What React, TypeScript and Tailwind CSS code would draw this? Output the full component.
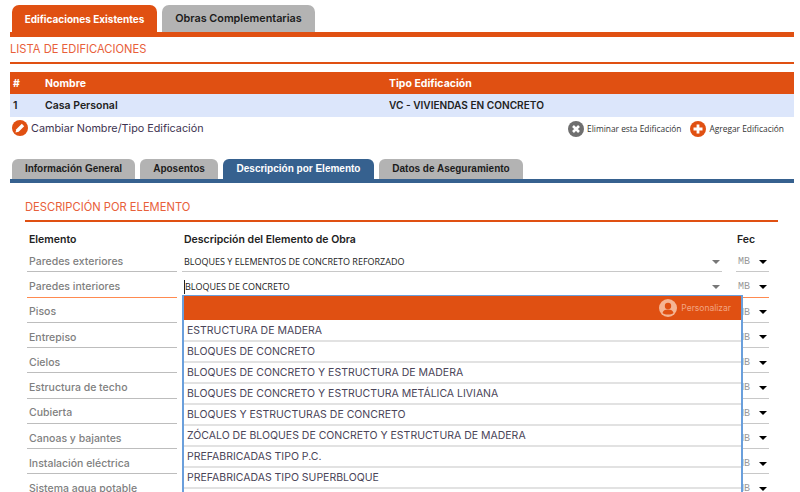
const poppins = "font-['Inter','Noto_Sans',sans-serif]";

const elementos = [
  'Paredes exteriores',
  'Paredes interiores',
  'Pisos',
  'Entrepiso',
  'Cielos',
  'Estructura de techo',
  'Cubierta',
  'Canoas y bajantes',
  'Instalación eléctrica',
  'Sistema agua potable',
];

const opciones = [
  'ESTRUCTURA DE MADERA',
  'BLOQUES DE CONCRETO',
  'BLOQUES DE CONCRETO Y ESTRUCTURA DE MADERA',
  'BLOQUES DE CONCRETO Y ESTRUCTURA METÁLICA LIVIANA',
  'BLOQUES Y ESTRUCTURAS DE CONCRETO',
  'ZÓCALO DE BLOQUES DE CONCRETO Y ESTRUCTURA DE MADERA',
  'PREFABRICADAS TIPO P.C.',
  'PREFABRICADAS TIPO SUPERBLOQUE',
];

function Caret({ dark }: { dark?: boolean }) {
  return (
    <span
      className={`block w-0 h-0 border-x-[4px] border-x-transparent border-t-[4px] ${
        dark ? 'border-t-black' : 'border-t-[#777777]'
      }`}
    />
  );
}

function PencilIcon() {
  return (
    <svg width="16" height="16" viewBox="0 0 16 16" className="shrink-0">
      <circle cx="8" cy="8" r="8" fill="#e05012" />
      <path d="M3.500 12.500l.8-3.200 5.500-5.500 2.400 2.400-5.500 5.500z" fill="#ffffff" />
    </svg>
  );
}

function CloseIcon() {
  return (
    <svg width="16" height="16" viewBox="0 0 16 16" className="shrink-0">
      <circle cx="8" cy="8" r="8" fill="#6f6f6f" />
      <path d="M5 5l6 6M11 5l-6 6" stroke="#ffffff" strokeWidth="2.600" />
    </svg>
  );
}

function PlusIcon() {
  return (
    <svg width="16" height="16" viewBox="0 0 16 16" className="shrink-0">
      <circle cx="8" cy="8" r="8" fill="#e05012" />
      <path d="M8 3.500v9M3.500 8h9" stroke="#ffffff" strokeWidth="2.800" />
    </svg>
  );
}

function UserIcon() {
  return (
    <svg width="18" height="18" viewBox="0 0 18 18" className="shrink-0">
      <circle cx="9" cy="9" r="9" fill="#f4b594" />
      <circle cx="9" cy="7" r="3.200" fill="#e05012" />
      <path d="M3.500 14c.5-2.600 2.500-3.600 5.500-3.600s5 1 5.500 3.600c-1.300 1-3.200 1.600-5.500 1.600s-4.200-.6-5.500-1.600z" fill="#e05012" />
    </svg>
  );
}

export default function App() {
  return (
    <div className="relative w-[800px] h-[492px] overflow-hidden bg-white pl-[10px] pr-[6px] pt-[5px]">
      <div className="flex gap-[5px] pl-[2px] h-[27px]">
        <div className={`${poppins} w-[145px] pt-[1px] rounded-t-[7px] bg-[#e05012] text-white text-[10px] font-bold flex items-center justify-center`}>
          Edificaciones Existentes
        </div>
        <div className={`${poppins} w-[153px] pt-[1px] rounded-t-[7px] bg-[#b3b3b3] text-[#1c1c1c] text-[10.800px] font-semibold flex items-center justify-center`}>
          Obras Complementarias
        </div>
      </div>
      <div className="h-[5px] bg-[#e05012]" />

      <div className="h-[27px] pt-[1px] border-b-2 border-[#e05012] flex items-center">
        <span className={`${poppins} text-[11.200px] text-[#e8603a] leading-none`}>LISTA DE EDIFICACIONES</span>
      </div>

      <div className={`${poppins} mt-[8px] h-[22px] pt-[1px] bg-[#e05012] text-white text-[10.500px] font-bold flex items-center`}>
        <span className="w-[35px] pl-[3px]">#</span>
        <span className="w-[344px]">Nombre</span>
        <span>Tipo Edificación</span>
      </div>
      <div className={`${poppins} h-[23px] bg-[#dce6fb] text-[#222222] text-[10.500px] font-semibold flex items-center`}>
        <span className="w-[35px] pl-[3px]">1</span>
        <span className="w-[344px]">Casa Personal</span>
        <span className="text-[10.100px]">VC - VIVIENDAS EN CONCRETO</span>
      </div>

      <div className="h-[24px] flex items-center justify-between pl-[2px] pr-[10px]">
        <div className="flex items-center gap-[3px]">
          <span className="-mt-[2px]">
            <PencilIcon />
          </span>
          <span className={`${poppins} text-[10.800px] text-[#3d3350]`}>Cambiar Nombre/Tipo Edificación</span>
        </div>
        <div className="flex items-center font-['Open_Sans',sans-serif] text-[8.400px] text-[#333333]">
          <CloseIcon />
          <span className="ml-[3px] mr-[9px]">Eliminar esta Edificación</span>
          <PlusIcon />
          <span className="ml-[3px]">Agregar Edificación</span>
        </div>
      </div>

      <div className="mt-[18px] flex gap-[5px] pl-[2px] h-[20px] font-['Liberation_Sans',Arial,sans-serif] text-[10px] font-bold">
        <div className="w-[123px] pb-[1px] rounded-t-[6px] bg-[#b3b3b3] text-[#1c1c1c] flex items-center justify-center">Información General</div>
        <div className="w-[78px] pb-[1px] rounded-t-[6px] bg-[#b3b3b3] text-[#1c1c1c] flex items-center justify-center">Aposentos</div>
        <div className="w-[151px] pb-[1px] rounded-t-[6px] bg-[#36618f] text-white flex items-center justify-center">Descripción por Elemento</div>
        <div className="w-[144px] pb-[1px] rounded-t-[6px] bg-[#b3b3b3] text-[#1c1c1c] flex items-center justify-center">Datos de Aseguramiento</div>
      </div>
      <div className="h-[4px] bg-[#36618f]" />

      <div className="pl-[15px] pr-[16px]">
        <div className="h-[39px] pt-[13px] border-b-2 border-[#e05012] flex items-center">
          <span className={`${poppins} text-[11.200px] text-[#e8603a] leading-none`}>DESCRIPCIÓN POR ELEMENTO</span>
        </div>

        <div className={`${poppins} mt-[10px] h-[15px] pt-[1px] flex items-center text-[10.500px] font-semibold text-[#222222] whitespace-nowrap`}>
          <span className="w-[159px] pl-[4px]">Elemento</span>
          <span className="w-[553px]">Descripción del Elemento de Obra</span>
          <span>Fec</span>
        </div>

        <div>
          {elementos.map((nombre, i) => (
            <div key={nombre} className="flex h-[25.250px] w-[760px]">
              <div
                className={`${poppins} ml-[2px] w-[150px] pl-[2px] pt-[5px] flex items-center border-b text-[10.500px] font-medium text-[#808080] ${
                  i === 1 ? 'border-[#ff8a50]' : 'border-[#bdbdbd]'
                }`}
              >
                {nombre}
              </div>
              <div className={`ml-[5px] w-[540px] pl-[2px] pr-[2px] pt-[5px] flex items-center justify-between border-b font-['Open_Sans',sans-serif] text-[9px] text-[#222222] ${
                i === 1 ? 'border-transparent' : 'border-[#c8c8c8]'
              }`}>
                {i === 0 && <span>BLOQUES Y ELEMENTOS DE CONCRETO REFORZADO</span>}
                {i === 1 && <span className="border-l border-[#222222]">BLOQUES DE CONCRETO</span>}
                <Caret />
              </div>
              <div className={`ml-[14px] w-[33px] pl-[2px] pr-[2px] pt-[5px] flex items-center justify-between border-b font-['Liberation_Mono',monospace] text-[10px] text-[#999999] ${
                i === 1 ? 'border-[#ff8a50]' : 'border-[#c8c8c8]'
              }`}>
                <span>MB</span>
                <Caret dark />
              </div>
            </div>
          ))}
        </div>
      </div>

      <div className="absolute left-[182px] top-[295px] w-[561px] h-[210px] bg-white border-x-2 border-t border-[#6a9fdc]">
        <div className="h-[24px] mb-[1px] bg-[#e05012] flex items-center justify-end gap-[4px] pr-[10px]">
          <UserIcon />
          <span className={`${poppins} text-[8.500px] text-[#f2a582]`}>Personalizar</span>
        </div>
        {opciones.map((op) => (
          <div
            key={op}
            className={`${poppins} h-[21px] pt-[1px] pl-[3px] flex items-center border-b-2 border-[#e2e2e2] text-[10.500px] text-[#4a4458]`}
          >
            {op}
          </div>
        ))}
      </div>
    </div>
  );
}
